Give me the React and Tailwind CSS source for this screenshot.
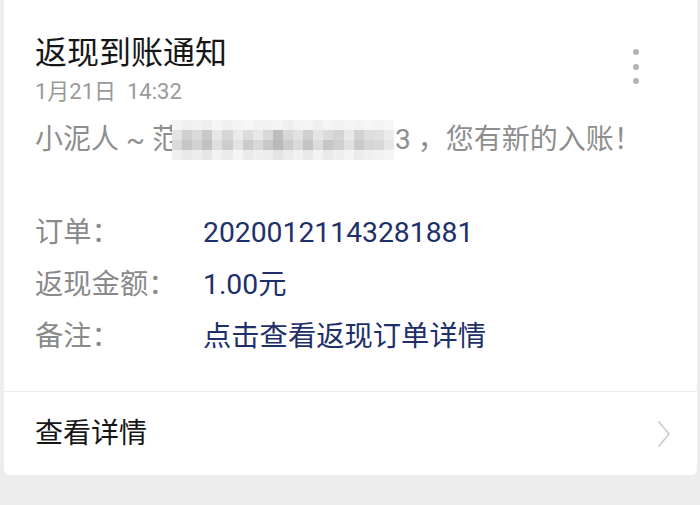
const mosaic = [
  ["#f4f4f4", "#efefef", "#f2f2f2", "#eeeeee", "#f5f5f5", "#f0f0f0", "#f3f3f3", "#f6f6f6", "#f2f2f2", "#f1f1f1", "#f4f4f4", "#efefef", "#f3f3f3", "#f5f5f5", "#f0f0f0", "#f4f4f4", "#f2f2f2", "#f5f5f5", "#f3f3f3", "#f6f6f6", "#f4f4f4", "#f7f7f7"],
  ["#e4e4e4", "#cfcfcf", "#dadada", "#c9c9c9", "#e6e6e6", "#d6d6d6", "#ebebeb", "#dcdcdc", "#e8e8e8", "#d9d9d9", "#bdbdbd", "#d8d8d8", "#e2e2e2", "#d0d0d0", "#e5e5e5", "#dbdbdb", "#d4d4d4", "#e8e8e8", "#d2d2d2", "#dedede", "#e0e0e0", "#ececec"],
  ["#dadada", "#c6c6c6", "#d2d2d2", "#c2c2c2", "#dfdfdf", "#cdcdcd", "#e3e3e3", "#cbcbcb", "#d8d8d8", "#c8c8c8", "#b9b9b9", "#cbcbcb", "#dadada", "#c4c4c4", "#dcdcdc", "#c7c7c7", "#cfcfcf", "#e1e1e1", "#c9c9c9", "#d5d5d5", "#d8d8d8", "#e6e6e6"],
  ["#f0f0f0", "#e9e9e9", "#ededed", "#e6e6e6", "#f2f2f2", "#ebebeb", "#f4f4f4", "#eaeaea", "#efefef", "#ececec", "#e4e4e4", "#ebebeb", "#f1f1f1", "#e8e8e8", "#f2f2f2", "#eaeaea", "#eeeeee", "#f3f3f3", "#ebebeb", "#f0f0f0", "#f2f2f2", "#f5f5f5"],
];

const rows = [
  { label: "订单：", value: "20200121143281881" },
  { label: "返现金额：", value: "1.00元" },
  { label: "备注：", value: "点击查看返现订单详情" },
];

function Mosaic() {
  return (
    <span className="inline-flex flex-col align-middle -ml-[8px] mr-[1px]">
      {mosaic.map((row, i) => (
        <span key={i} className="flex">
          {row.map((c, j) => (
            <span key={j} className="block w-[10.1px] h-[10px]" style={{ backgroundColor: c }} />
          ))}
        </span>
      ))}
    </span>
  );
}

export default function App() {
  return (
    <div
      className="w-[700px] h-[505px] bg-[#ededed] pl-[4px] pr-[3px] overflow-hidden"
      style={{ fontFamily: 'Roboto, "Noto Sans CJK SC", sans-serif' }}
    >
      <div className="bg-white rounded-b-[6px] h-[475px] flex flex-col">
        <div className="pl-[31px] pr-[58px] pt-[31px] flex justify-between items-start">
          <div>
            <div className="text-[32px] leading-[44px] text-[#161616]">返现到账通知</div>
            <div className="mt-[2px] text-[22px] leading-[30px] text-[#9a9a9a] whitespace-pre">1月21日  14:32</div>
          </div>
          <div className="mt-[18px] flex flex-col gap-[8.5px]">
            <span className="block w-[6px] h-[6px] rounded-full bg-[#b4b4b4]" />
            <span className="block w-[6px] h-[6px] rounded-full bg-[#b4b4b4]" />
            <span className="block w-[6px] h-[6px] rounded-full bg-[#b4b4b4]" />
          </div>
        </div>

        <div className="pl-[31px] mt-[13px] text-[28px] leading-[40px] text-[#8e8e8e] whitespace-pre flex items-center">
          <span>小泥人 ~ 范</span>
          <Mosaic />
          <span>3 ，您有新的入账！</span>
        </div>

        <div className="pl-[31px] mt-[47px] flex flex-col">
          {rows.map((r) => (
            <div key={r.label} className="flex items-center h-[52px] text-[28.3px]">
              <span className="w-[168px] text-[#8a8a8a]">{r.label}</span>
              <span className="text-[#1e2f6a]">{r.value}</span>
            </div>
          ))}
        </div>

        <div className="mt-[28px] border-t border-[#ececec] flex-1 flex items-center justify-between pl-[31px] pr-[27px]">
          <span className="text-[28px] text-[#161616]">查看详情</span>
          <svg width="12" height="26" viewBox="0 0 12 26" fill="none">
            <polyline points="1,1 11,13 1,25" stroke="#cdcdcd" strokeWidth="1.8" strokeLinejoin="round" strokeLinecap="round" />
          </svg>
        </div>
      </div>
    </div>
  );
}
